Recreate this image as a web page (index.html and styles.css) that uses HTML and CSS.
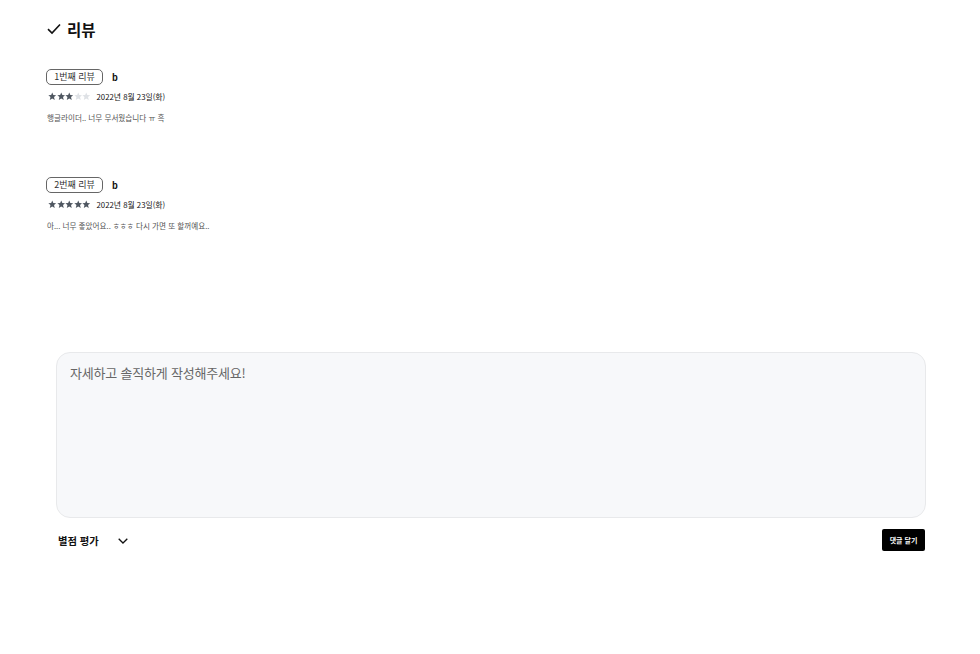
FILE: index.html
```html
<!DOCTYPE html>
<html lang="ko">
<head>
<meta charset="utf-8">
<link rel="stylesheet" href="styles.css">
</head>
<body>
<div class="page">
  <h2 class="title">
    <svg class="check" width="14" height="12" viewBox="0 0 14 12"><path d="M1 6.2 L5 10 L13 1.5" fill="none" stroke="#111" stroke-width="1.6"/></svg>
    <span>리뷰</span>
  </h2>

  <div class="review">
    <div class="row">
      <span class="tag">1번째 리뷰</span>
      <span class="user">b</span>
    </div>
    <div class="row meta">
      <span class="stars">
        <svg viewBox="0 0 10 10" class="star on"><path d="M5 0.5 L6.3 3.6 L9.6 3.8 L7.1 6 L7.9 9.3 L5 7.5 L2.1 9.3 L2.9 6 L0.4 3.8 L3.7 3.6Z"/></svg>
        <svg viewBox="0 0 10 10" class="star on"><path d="M5 0.5 L6.3 3.6 L9.6 3.8 L7.1 6 L7.9 9.3 L5 7.5 L2.1 9.3 L2.9 6 L0.4 3.8 L3.7 3.6Z"/></svg>
        <svg viewBox="0 0 10 10" class="star on"><path d="M5 0.5 L6.3 3.6 L9.6 3.8 L7.1 6 L7.9 9.3 L5 7.5 L2.1 9.3 L2.9 6 L0.4 3.8 L3.7 3.6Z"/></svg>
        <svg viewBox="0 0 10 10" class="star off"><path d="M5 0.5 L6.3 3.6 L9.6 3.8 L7.1 6 L7.9 9.3 L5 7.5 L2.1 9.3 L2.9 6 L0.4 3.8 L3.7 3.6Z"/></svg>
        <svg viewBox="0 0 10 10" class="star off"><path d="M5 0.5 L6.3 3.6 L9.6 3.8 L7.1 6 L7.9 9.3 L5 7.5 L2.1 9.3 L2.9 6 L0.4 3.8 L3.7 3.6Z"/></svg>
      </span>
      <span class="date">2022년 8월 23일(화)</span>
    </div>
    <p class="content">행글라이더.. 너무 무서웠습니다 ㅠ 흑</p>
  </div>

  <div class="review">
    <div class="row">
      <span class="tag">2번째 리뷰</span>
      <span class="user">b</span>
    </div>
    <div class="row meta">
      <span class="stars">
        <svg viewBox="0 0 10 10" class="star on"><path d="M5 0.5 L6.3 3.6 L9.6 3.8 L7.1 6 L7.9 9.3 L5 7.5 L2.1 9.3 L2.9 6 L0.4 3.8 L3.7 3.6Z"/></svg>
        <svg viewBox="0 0 10 10" class="star on"><path d="M5 0.5 L6.3 3.6 L9.6 3.8 L7.1 6 L7.9 9.3 L5 7.5 L2.1 9.3 L2.9 6 L0.4 3.8 L3.7 3.6Z"/></svg>
        <svg viewBox="0 0 10 10" class="star on"><path d="M5 0.5 L6.3 3.6 L9.6 3.8 L7.1 6 L7.9 9.3 L5 7.5 L2.1 9.3 L2.9 6 L0.4 3.8 L3.7 3.6Z"/></svg>
        <svg viewBox="0 0 10 10" class="star on"><path d="M5 0.5 L6.3 3.6 L9.6 3.8 L7.1 6 L7.9 9.3 L5 7.5 L2.1 9.3 L2.9 6 L0.4 3.8 L3.7 3.6Z"/></svg>
        <svg viewBox="0 0 10 10" class="star on"><path d="M5 0.5 L6.3 3.6 L9.6 3.8 L7.1 6 L7.9 9.3 L5 7.5 L2.1 9.3 L2.9 6 L0.4 3.8 L3.7 3.6Z"/></svg>
      </span>
      <span class="date">2022년 8월 23일(화)</span>
    </div>
    <p class="content">아... 너무 좋았어요.. ㅎㅎㅎ 다시 가면 또 할꺼예요..</p>
  </div>

  <form class="write">
    <textarea class="box" placeholder="자세하고 솔직하게 작성해주세요!"></textarea>
    <div class="controls">
      <div class="rating">
        <span>별점 평가</span>
        <svg width="10" height="6" viewBox="0 0 10 6"><path d="M0.7 0.7 L5 5 L9.3 0.7" fill="none" stroke="#111" stroke-width="1.3"/></svg>
      </div>
      <button type="button" class="submit">댓글 달기</button>
    </div>
  </form>
</div>
</body>
</html>
```

FILE: styles.css
```css
* { box-sizing: border-box; }
html, body { margin: 0; padding: 0; background: #fff; }
body {
  font-family: "Noto Sans CJK KR", "Noto Sans", sans-serif;
  color: #111;
}
.page {
  padding: 18px 55px 0 47px;
}
.title {
  margin: 0;
  display: flex;
  align-items: center;
  gap: 6px;
  font-size: 15.5px;
  font-weight: 700;
  height: 22px;
}
.check { display: block; }
.review {
  margin-top: 29px;
  height: 79px;
}
.review + .review { margin-top: 29px; }
.row {
  display: flex;
  align-items: center;
}
.tag {
  display: inline-block;
  width: 57px;
  height: 16px;
  line-height: 14px;
  border: 1px solid #666;
  border-radius: 5px;
  font-size: 9px;
  text-align: center;
  color: #333;
  margin-left: -1px;
}
.user {
  margin-left: 9px;
  font-size: 9px;
  font-weight: 700;
}
.meta { margin-top: 4px; height: 14px; }
.stars { display: flex; gap: 0; margin-left: 1px; }
.star { width: 8.5px; height: 8.5px; display: block; }
.star.on { fill: #4f5761; }
.star.off { fill: #dfe2e6; }
.date {
  margin-left: 6px;
  font-size: 7.8px;
  color: #111;
}
.content {
  margin: 9px 0 0;
  font-size: 7.6px;
  color: #555;
}
.write {
  margin-top: 96px;
  padding-left: 9px;
}
.box {
  display: block;
  width: 870px;
  height: 166px;
  background: #f7f8fa;
  border: 1px solid #e8e9eb;
  border-radius: 14px;
  padding: 10px 13px;
  font-family: "Noto Sans CJK KR", "Noto Sans", sans-serif;
  font-size: 13px;
  letter-spacing: -0.2px;
  resize: none;
  outline: none;
}
.box::placeholder { color: #666; }
.controls {
  display: flex;
  justify-content: space-between;
  align-items: center;
  margin-top: 11px;
  width: 869px;
}
.rating {
  display: flex;
  align-items: center;
  gap: 19px;
  margin-left: 2px;
  font-size: 10.3px;
  font-weight: 700;
  padding-top: 1px;
}
.rating svg { display: block; margin-top: 1px; }
.submit {
  width: 43px;
  height: 22px;
  padding: 0;
  border: none;
  border-radius: 2px;
  background: #000;
  color: #fff;
  font-family: "Noto Sans CJK KR", "Noto Sans", sans-serif;
  font-size: 7px;
  font-weight: 700;
}
```
